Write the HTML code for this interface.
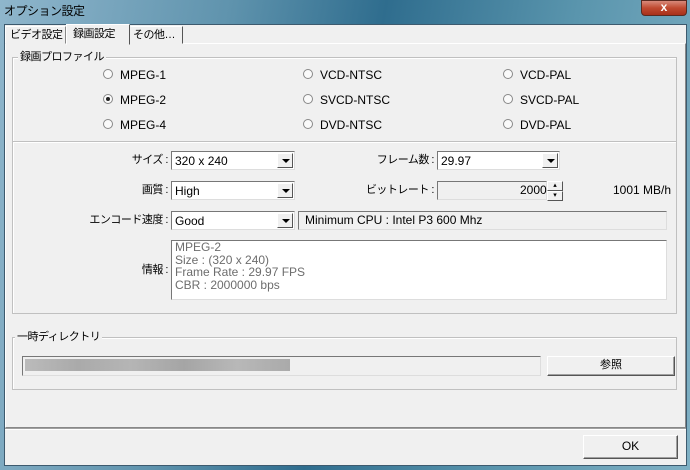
<!DOCTYPE html>
<html><head><meta charset="utf-8"><style>
*{margin:0;padding:0;box-sizing:border-box}
body{width:690px;height:470px;overflow:hidden;background:linear-gradient(100deg,#8fb6cc 0%,#5f93ad 30%,#2f6d8e 50%,#5a95ad 75%,#7fb0c4 100%);font-family:"Liberation Sans","Noto Sans CJK JP",sans-serif;font-size:12px;color:#000;position:relative}
.a{position:absolute}
.client{left:4px;top:24px;width:683px;height:442px;background:#f0f0f0;border:1px solid #3d5a6e}
.t{position:absolute;white-space:nowrap;font-size:12px;line-height:14px}
.j{font-size:11px;letter-spacing:-0.5px}
.r{text-align:right}
.combo{position:absolute;background:#fff;border:1px solid;border-color:#777 #ddd #ddd #777;height:19px}
.combo span{position:absolute;left:3px;top:2px;font-size:12px}
.btn{position:absolute;right:1px;top:1px;width:16px;height:15px;background:#f0f0f0;border:1px solid;border-color:#fff #555 #555 #fff}
.btn:after{content:"";position:absolute;left:4px;top:5px;border-left:4px solid transparent;border-right:4px solid transparent;border-top:4px solid #000}
.radio{position:absolute;width:10px;height:10px;border-radius:50%;border:1px solid #888;background:#fafafa}
.dot:after{content:"";position:absolute;left:2px;top:2px;width:4px;height:4px;border-radius:50%;background:#222}
.grp{position:absolute;border:1px solid #c0c0c0;box-shadow:1px 1px 0 #fff inset}
.gl{position:absolute;background:#f0f0f0;padding:0 2px;font-size:11px;line-height:14px;letter-spacing:-0.5px}
.pb{position:absolute;background:#f0f0f0;border:1px solid;border-color:#fff #555 #555 #fff;box-shadow:inset -1px -1px 0 #a0a0a0;text-align:center;font-size:11px}
</style></head><body>
<div class="t j" style="left:4px;top:4px;color:#000;font-size:12px">オプション設定</div>
<div class="a" style="left:641px;top:0;width:46px;height:16px;border-radius:0 0 4px 4px;background:linear-gradient(#d88a7a,#c04a30 50%,#a8301a);border:1px solid #5a2a20;color:#fff;text-align:center;font-weight:bold;font-size:12px;line-height:13px">x</div>
<div class="a client"></div>
<div class="a" style="left:5px;top:43px;width:681px;height:385px;border:1px solid;border-color:#fff #888 #888 #fff"></div>
<div class="a" style="left:5px;top:26px;width:61px;height:18px;border:1px solid;border-color:#fff #888 transparent #fff;background:#f0f0f0"></div>
<div class="t j" style="left:10px;top:28px">ビデオ設定</div>
<div class="a" style="left:66px;top:24px;width:64px;height:21px;border:1px solid;border-color:#fff #555 transparent #fff;background:#f0f0f0"></div>
<div class="t j" style="left:73px;top:27px">録画設定</div>
<div class="a" style="left:130px;top:26px;width:53px;height:18px;border:1px solid;border-color:#fff #555 transparent transparent;background:#f0f0f0"></div>
<div class="t j" style="left:133px;top:28px">その他…</div>
<div class="grp" style="left:12px;top:57px;width:665px;height:257px"></div>
<div class="a" style="left:13px;top:141px;width:663px;height:2px;border-top:1px solid #c0c0c0;border-bottom:1px solid #fff"></div>
<div class="gl" style="left:18px;top:50px">録画プロファイル</div>
<div class="radio" style="left:103px;top:69px"></div><div class="t" style="left:120px;top:68px">MPEG-1</div>
<div class="radio dot" style="left:103px;top:94px"></div><div class="t" style="left:120px;top:93px">MPEG-2</div>
<div class="radio" style="left:103px;top:119px"></div><div class="t" style="left:120px;top:118px">MPEG-4</div>
<div class="radio" style="left:303px;top:69px"></div><div class="t" style="left:320px;top:68px">VCD-NTSC</div>
<div class="radio" style="left:303px;top:94px"></div><div class="t" style="left:320px;top:93px">SVCD-NTSC</div>
<div class="radio" style="left:303px;top:119px"></div><div class="t" style="left:320px;top:118px">DVD-NTSC</div>
<div class="radio" style="left:503px;top:69px"></div><div class="t" style="left:520px;top:68px">VCD-PAL</div>
<div class="radio" style="left:503px;top:94px"></div><div class="t" style="left:520px;top:93px">SVCD-PAL</div>
<div class="radio" style="left:503px;top:119px"></div><div class="t" style="left:520px;top:118px">DVD-PAL</div>
<div class="t j r" style="left:60px;width:108px;top:153px">サイズ :</div>
<div class="combo" style="left:171px;top:151px;width:124px"><span>320 x 240</span><div class="btn"></div></div>
<div class="t j r" style="left:330px;width:104px;top:153px">フレーム数 :</div>
<div class="combo" style="left:437px;top:151px;width:123px"><span>29.97</span><div class="btn"></div></div>
<div class="t j r" style="left:60px;width:108px;top:183px">画質 :</div>
<div class="combo" style="left:171px;top:181px;width:124px"><span>High</span><div class="btn"></div></div>
<div class="t j r" style="left:330px;width:104px;top:183px">ビットレート :</div>
<div class="a" style="left:437px;top:181px;width:110px;height:19px;background:#f0f0f0;border:1px solid;border-color:#777 #ddd #ddd #777"></div>
<div class="t" style="left:520px;top:183px">2000</div>
<div class="a" style="left:547px;top:181px;width:16px;height:10px;border:1px solid;border-color:#fff #555 #555 #fff;font-size:7px;line-height:8px;text-align:center">▴</div>
<div class="a" style="left:547px;top:191px;width:16px;height:10px;border:1px solid;border-color:#fff #555 #555 #fff;font-size:7px;line-height:8px;text-align:center">▾</div>
<div class="t" style="left:613px;top:183px">1001 MB/h</div>
<div class="t j r" style="left:40px;width:128px;top:213px">エンコード速度 :</div>
<div class="combo" style="left:171px;top:211px;width:124px"><span>Good</span><div class="btn"></div></div>
<div class="a" style="left:298px;top:211px;width:369px;height:19px;background:#f0f0f0;border:1px solid;border-color:#777 #ddd #ddd #777"></div>
<div class="t" style="left:305px;top:213px">Minimum CPU : Intel P3 600 Mhz</div>
<div class="t j r" style="left:60px;width:108px;top:263px">情報 :</div>
<div class="a" style="left:171px;top:240px;width:496px;height:60px;background:#fff;border:1px solid;border-color:#777 #ddd #ddd #777"></div>
<div class="t" style="left:175px;top:241px;color:#6d6d6d;line-height:12.5px">MPEG-2<br>Size : (320 x 240)<br>Frame Rate : 29.97 FPS<br>CBR : 2000000 bps</div>
<div class="grp" style="left:12px;top:337px;width:665px;height:53px"></div>
<div class="gl" style="left:15px;top:330px">一時ディレクトリ</div>
<div class="a" style="left:22px;top:356px;width:519px;height:20px;background:#f0f0f0;border:1px solid;border-color:#777 #ddd #ddd #777"></div>
<div class="a" style="left:25px;top:359px;width:265px;height:12px;background:linear-gradient(90deg,#bbb,#aaa 20%,#b5b5b5 40%,#a5a5a5 60%,#b8b8b8 80%,#aaa)"></div>
<div class="pb" style="left:547px;top:356px;width:128px;height:20px;line-height:17px">参照</div>
<div class="a" style="left:5px;top:428px;width:681px;height:2px;border-top:1px solid #a0a0a0;border-bottom:1px solid #fff"></div>
<div class="pb" style="left:583px;top:435px;width:95px;height:24px;line-height:21px;font-size:12px">OK</div>
</body></html>
